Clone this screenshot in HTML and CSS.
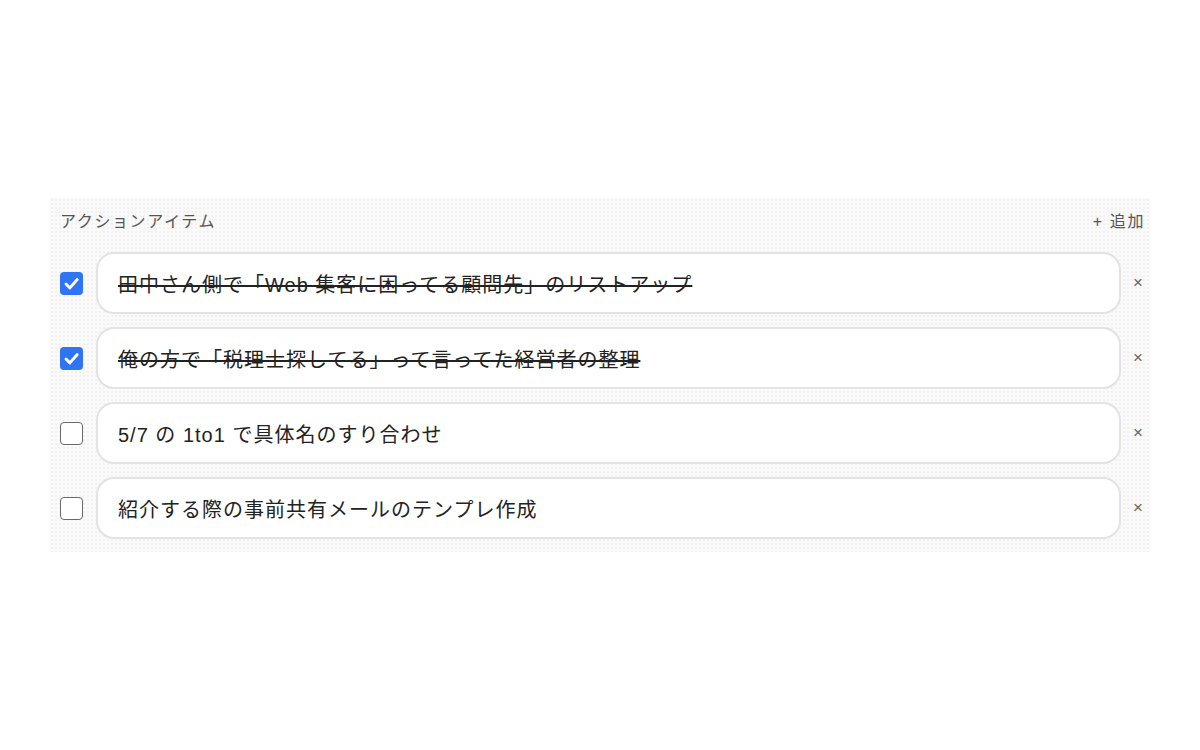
FILE: index.html
```html
<!DOCTYPE html>
<html lang="ja">
<head>
<meta charset="utf-8">
<link rel="stylesheet" href="styles.css">
</head>
<body>
<section class="panel">
  <header class="panel-head">
    <span class="panel-title">アクションアイテム</span>
    <span class="add">+ 追加</span>
  </header>
  <ul class="items">
    <li class="item">
      <span class="check checked"><svg viewBox="0 0 23 23" width="23" height="23"><path d="M6 12l3.9 3.9 7.3-8.4" fill="none" stroke="#fff" stroke-width="2.9" stroke-linecap="round" stroke-linejoin="round"/></svg></span>
      <div class="field done">田中さん側で「Web 集客に困ってる顧問先」のリストアップ</div>
      <span class="remove">×</span>
    </li>
    <li class="item">
      <span class="check checked"><svg viewBox="0 0 23 23" width="23" height="23"><path d="M6 12l3.9 3.9 7.3-8.4" fill="none" stroke="#fff" stroke-width="2.9" stroke-linecap="round" stroke-linejoin="round"/></svg></span>
      <div class="field done">俺の方で「税理士探してる」って言ってた経営者の整理</div>
      <span class="remove">×</span>
    </li>
    <li class="item">
      <span class="check"></span>
      <div class="field">5/7 の 1to1 で具体名のすり合わせ</div>
      <span class="remove">×</span>
    </li>
    <li class="item">
      <span class="check"></span>
      <div class="field">紹介する際の事前共有メールのテンプレ作成</div>
      <span class="remove">×</span>
    </li>
  </ul>
</section>
</body>
</html>
```

FILE: styles.css
```css
* { box-sizing: border-box; }
html, body { margin: 0; background: #fff; }
body {
  font-family: "Liberation Sans", "Noto Sans CJK JP", sans-serif;
  padding-top: 198px;
}
.panel {
  width: 1100px;
  margin: 0 auto;
  background-color: #fafafa;
  background-image: radial-gradient(circle, #ececec 0.6px, transparent 0.9px);
  background-size: 4px 4px;
  padding: 10px 0 13px 10px;
}
.panel-head {
  display: flex;
  justify-content: space-between;
  align-items: center;
  height: 24px;
  padding-right: 5px;
  margin-bottom: 20px;
  color: #555;
  font-size: 16px;
  letter-spacing: 0.1em;
}
.items {
  list-style: none;
  margin: 0;
  padding: 0;
  display: flex;
  flex-direction: column;
  gap: 13px;
}
.item {
  display: flex;
  align-items: center;
}
.check {
  width: 23px;
  height: 23px;
  flex: none;
  border: 1.5px solid #6a6a6a;
  border-radius: 4px;
  background: #fff;
  margin-right: 13px;
  display: flex;
}
.check.checked {
  border: none;
  background: #2f74f5;
}
.field {
  flex: 1;
  height: 62px;
  border: 2px solid #e3e3e3;
  border-radius: 18px;
  background: #fff;
  display: flex;
  align-items: center;
  padding-left: 20px;
  font-size: 20px;
  letter-spacing: 1px;
  color: #222;
  white-space: pre;
}
.field.done { text-decoration: line-through; text-decoration-thickness: 1.5px; }
.remove {
  width: 29px;
  flex: none;
  text-align: center;
  padding-left: 5px;
  font-size: 17px;
  color: #666;
}
```
